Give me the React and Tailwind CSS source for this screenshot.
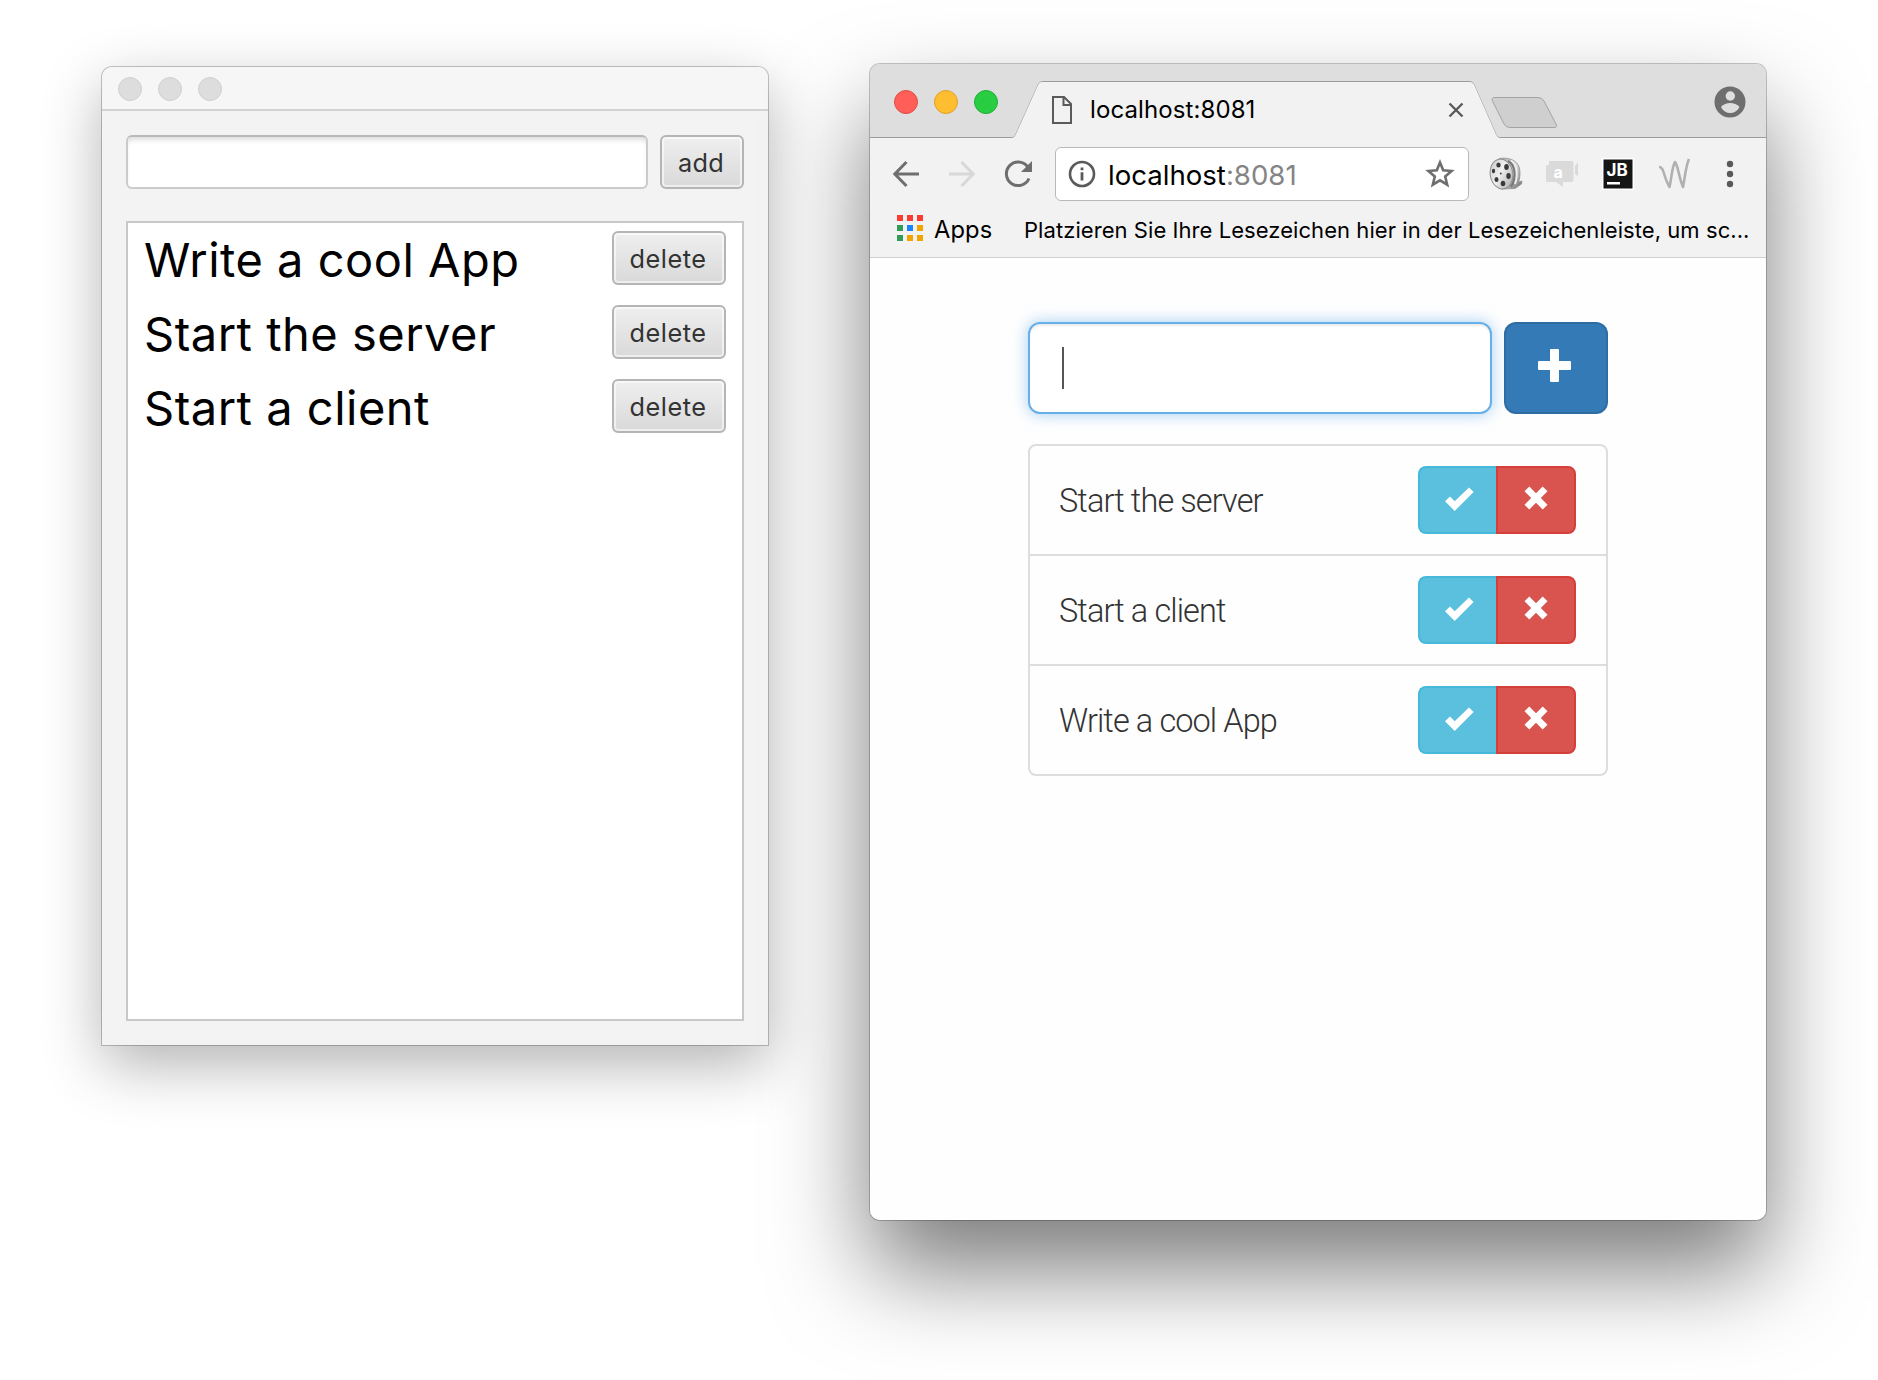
import React from "react";

const sys = "font-[Inter,sans-serif]";

function JavaButton({ children, className }) {
  return (
    <button
      className={`${className} ${sys} flex h-[54px] shrink-0 items-center justify-center rounded-[6px] border-2 border-[#b5b5b5] bg-linear-to-b from-[#efefef] to-[#d9d9d9] pt-[2px] pr-[2px] text-[25.3px] text-[#333] shadow-[inset_0_0_0_2px_rgba(255,255,255,0.55)]`}
    >
      {children}
    </button>
  );
}

function DesktopWindow() {
  const rows = ["Write a cool App", "Start the server", "Start a client"];
  return (
    <section className="mt-[67px] ml-[102px] flex h-[978px] w-[666px] shrink-0 flex-col rounded-t-[10px] bg-[#f3f3f3] shadow-[0_0_0_1px_rgba(0,0,0,0.22),0_20px_60px_rgba(0,0,0,0.3)]">
      <header className="flex h-[44px] shrink-0 items-center gap-4 rounded-t-[10px] border-b-2 border-[#d2d2d2] bg-[#f6f6f6] pt-[2px] pl-4">
        {[0, 1, 2].map((i) => (
          <span key={i} className="size-6 rounded-full border border-[#cfcfcf] bg-[#dddddd]" />
        ))}
      </header>
      <div className="flex grow flex-col px-6 pt-6 pb-6">
        <div className="flex gap-3">
          <div className="h-[54px] w-[522px] rounded-[6px] border-2 border-[#cbcbcb] border-t-[#b9b9b9] bg-white shadow-[inset_0_5px_5px_-2px_rgba(0,0,0,0.13)]" />
          <JavaButton className="w-[84px] tracking-[0.2px]">add</JavaButton>
        </div>
        <ul className="mt-8 flex h-[800px] flex-col gap-5 border-2 border-[#c8c8c8] bg-white pt-2 pr-4 pl-4">
          {rows.map((label) => (
            <li key={label} className="flex h-[54px] items-center justify-between">
              <span className={`${sys} pt-[3px] text-[47px] leading-[54px] tracking-[0.5px] whitespace-nowrap text-black`}>
                {label}
              </span>
              <JavaButton className="w-[114px] tracking-[0.5px]">delete</JavaButton>
            </li>
          ))}
        </ul>
      </div>
    </section>
  );
}

function TabStrip() {
  return (
    <div className="relative h-[74px] shrink-0 overflow-hidden rounded-t-[10px] bg-[#dedede]">
      <svg className="absolute inset-0" width="896" height="74" viewBox="0 0 896 74">
        <path
          d="M0 73.5H142.5Q144.500 73.500 145.500 71L168.500 20Q170 17.500 172.500 17.500H600Q602.500 17.500 604 20.500L626 70.500Q627.500 73.500 629.500 73.500H896"
          fill="none"
          stroke="#9b9b9b"
        />
        <path
          d="M142.5 74Q144.500 73.500 145.500 71L168.500 20Q170 18 172.500 18H600Q602.500 18 604 20.500L626 70.500Q627.500 73.500 629.500 74Z"
          fill="#f2f2f2"
        />
        <path
          d="M625 33.500H668Q672 33.500 674 37L686 60Q688 63.500 684 63.500H640Q636 63.500 634 60L622.500 37Q621 33.500 625 33.500Z"
          fill="#cfcfcf"
          stroke="#a3a3a3"
        />
      </svg>
      <div className="relative flex h-full items-center pt-[2px]">
        <div className="ml-6 flex gap-4">
          <span className="size-6 rounded-full border border-[#e24b45] bg-[#ff5f58]" />
          <span className="size-6 rounded-full border border-[#e0a028] bg-[#ffbe2f]" />
          <span className="size-6 rounded-full border border-[#1fae34] bg-[#29cd42]" />
        </div>
        <svg className="mt-[16px] ml-[50px] size-[28px]" viewBox="0 0 28 28" fill="none" stroke="#5a5a5a" strokeWidth="2">
          <path d="M5 1H16L23 8V27H5Z M15.500 1V9H23" />
        </svg>
        <span className={`${sys} mt-[16px] ml-[14px] w-[358px] text-[24px] leading-7 tracking-[0.1px] text-black`}>
          localhost:8081
        </span>
        <svg className="mt-[16px] size-[16px]" viewBox="0 0 16 16" stroke="#5a5a5a" strokeWidth="2.4">
          <path d="M1.500 1.500L14.500 14.500M14.500 1.500L1.500 14.500" />
        </svg>
        <svg className="mr-[20px] ml-auto size-[32px]" viewBox="0 0 32 32">
          <circle cx="16" cy="16" r="15.500" fill="#6e6e6e" />
          <circle cx="16.300" cy="10" r="4.700" fill="#dedede" />
          <path d="M7 21C9 18.500 13 17 16.200 17S23.500 18.500 25.500 21C23.500 25 20 27 16.200 27S9 25 7 21Z" fill="#dedede" />
        </svg>
      </div>
    </div>
  );
}

function FilmReel() {
  return (
    <svg className="size-[34px]" viewBox="0 0 34 34">
      <defs>
        <linearGradient id="reel" x1="0" x2="1" y1="0" y2="1">
          <stop offset="0" stopColor="#c4c4c4" />
          <stop offset="0.45" stopColor="#f0f0f0" />
          <stop offset="1" stopColor="#a4a4a4" />
        </linearGradient>
        <linearGradient id="rim" x1="0" x2="1" y1="0" y2="1">
          <stop offset="0" stopColor="#b0b0b0" />
          <stop offset="0.5" stopColor="#d8d8d8" />
          <stop offset="1" stopColor="#6a6a6a" />
        </linearGradient>
      </defs>
      <path d="M10 1.500C20 0 28 3 30.500 11C31.500 17 31 21 29.500 25L33 24L32.500 27L26 31.500L12 32Z" fill="url(#rim)" stroke="#909090" strokeWidth="0.800" />
      <path d="M19 4C26 7 28 20 22 30" fill="none" stroke="#787878" strokeWidth="2" />
      <path d="M22 3.500C28 7 29.500 17 26 27" fill="none" stroke="#efefef" strokeWidth="1.800" />
      <ellipse cx="12.500" cy="17" rx="11.300" ry="15" fill="url(#reel)" stroke="#8d8d8d" transform="rotate(-10 12.500 17)" />
      <g fill="#3a3a3a">
        <ellipse cx="9.500" cy="8" rx="2.200" ry="2.500" />
        <ellipse cx="17.500" cy="10" rx="2.300" ry="3" />
        <ellipse cx="19.500" cy="19" rx="2.200" ry="3" />
        <ellipse cx="14" cy="26.500" rx="2.300" ry="2.700" />
        <ellipse cx="7.500" cy="22.500" rx="2" ry="2.500" />
        <ellipse cx="4.500" cy="14" rx="1.600" ry="2.300" />
        <circle cx="11.800" cy="16.500" r="0.900" />
      </g>
    </svg>
  );
}

function Toolbar() {
  return (
    <div className="relative flex h-[72px] shrink-0 items-center">
      <svg className="ml-[22px] size-[28px]" viewBox="0 0 28 28" fill="none" stroke="#6e6e6e" strokeWidth="3">
        <path d="M27 14H3M14.500 2L2.800 14L14.500 26" />
      </svg>
      <svg className="ml-[28px] size-[28px]" viewBox="0 0 28 28" fill="none" stroke="#d8d8d8" strokeWidth="3">
        <path d="M1 14H25M13.500 2L25.200 14L13.500 26" />
      </svg>
      <svg className="ml-[28px] size-[28px]" viewBox="0 0 28 28">
        <path d="M23.500 6.500A11.800 11.800 0 1 0 25 18.500" fill="none" stroke="#6e6e6e" strokeWidth="3" />
        <path d="M28 1V12H17Z" fill="#6e6e6e" />
      </svg>
      <div className="ml-[23px] flex h-[54px] w-[414px] items-center rounded-[6px] border border-[#b8b8b8] bg-white">
        <svg className="ml-[12px] size-[28px]" viewBox="0 0 28 28">
          <circle cx="14" cy="14" r="12" fill="none" stroke="#5a5a5a" strokeWidth="2.600" />
          <path d="M12.600 7.500H15.400V10.300H12.600ZM12.600 12.300H15.400V20.500H12.600Z" fill="#5a5a5a" />
        </svg>
        <span className={`${sys} ml-[12px] pt-[2px] text-[27.6px] leading-8 text-black`}>
          localhost<span className="text-[#848484]">:8081</span>
        </span>
        <svg className="mr-[13px] ml-auto size-[30px]" viewBox="0 0 30 30" fill="none" stroke="#6e6e6e" strokeWidth="2.600">
          <path d="M15 3.500L18.200 11.300L26.600 12L20.200 17.500L22.200 25.700L15 21.300L7.800 25.700L9.800 17.500L3.400 12L11.800 11.300Z" />
        </svg>
      </div>
      <div className="ml-[20px] flex items-center">
        <FilmReel />
        <svg className="ml-[22px] h-[28px] w-[34px]" viewBox="0 0 34 28">
          <path d="M4 1H27Q28.500 1 28.500 3V20Q28.500 22 26 22H18V27L11 22H2Q1 22 1 20V6Q1 5 3 5H4Z" fill="#dadada" />
          <path d="M30 6Q32 4 33 2V17Q32 15 30 14Z" fill="#dadada" />
          <text x="8.500" y="18" fontSize="16" fontWeight="700" fontFamily="Inter" fill="#fff">a</text>
        </svg>
        <svg className="ml-[23px] size-[32px]" viewBox="0 0 32 32">
          <rect width="32" height="32" fill="#fff" />
          <rect x="1.500" y="1.500" width="29" height="29" fill="#151515" />
          <rect x="5" y="24" width="13" height="2.500" fill="#fff" />
          <text x="4.500" y="17.500" fontSize="17" fontWeight="700" fontFamily="Inter" fill="#fff">JB</text>
        </svg>
        <svg className="ml-[23px] size-[34px]" viewBox="0 0 34 34" fill="none" stroke="#b0b0b0" strokeLinejoin="round" strokeWidth="2.600">
          <path d="M2 10Q5 10 6.500 15Q9 24 12.500 30C14 24 15 10 18 5C21 8 22 21 26 30C28 20 29 8 32 2" />
        </svg>
        <svg className="ml-[35px] h-[28px] w-[8px]" viewBox="0 0 8 28" fill="#5a5a5a">
          <circle cx="4" cy="4" r="3.200" />
          <circle cx="4" cy="14" r="3.200" />
          <circle cx="4" cy="24" r="3.200" />
        </svg>
      </div>
    </div>
  );
}

const appDots = [
  "bg-[#fa3c33]",
  "bg-[#fa3c33]",
  "bg-[#fa3c33]",
  "bg-[#319b58]",
  "bg-[#1a85ff]",
  "bg-[#f2a400]",
  "bg-[#319b58]",
  "bg-[#f2a400]",
  "bg-[#f2a400]",
];

function BookmarkBar() {
  return (
    <div className="flex h-[48px] shrink-0 items-center border-b border-[#cfcfcf]">
      <div className="mb-[11px] ml-[27px] grid grid-cols-3 gap-1">
        {appDots.map((c, i) => (
          <span key={i} className={`size-[6px] ${c}`} />
        ))}
      </div>
      <span className={`${sys} mb-[7px] ml-[11px] w-[90px] text-[23.7px] leading-7 tracking-[0.1px] text-black`}>Apps</span>
      <span className={`${sys} mb-[7px] text-[22px] leading-7 tracking-[0.06px] whitespace-nowrap text-black`}>
        Platzieren Sie Ihre Lesezeichen hier in der Lesezeichenleiste, um sc...
      </span>
    </div>
  );
}

function TodoPage() {
  return (
    <main className="flex grow flex-col rounded-b-[10px] bg-[#fefefe] px-[158px] pt-[64px]">
      <div className="flex gap-3">
        <div className="flex h-[92px] w-[464px] items-center rounded-[12px] border-2 border-[#66afe9] bg-white pl-8 shadow-[inset_0_2px_2px_rgba(0,0,0,0.075),0_0_16px_rgba(102,175,233,0.6)]">
          <span className="h-[42px] w-[2px] bg-[#555]" />
        </div>
        <button className="flex h-[92px] w-[104px] items-center justify-center rounded-[12px] border-2 border-[#2e6da4] bg-[#337ab7]">
          <svg className="mb-[5px] ml-[-3px] size-[33px]" viewBox="0 0 33 33" fill="#fff">
            <path d="M13 0H20Q21 0 21 1V12H32Q33 12 33 13V20Q33 21 32 21H21V32Q21 33 20 33H13Q12 33 12 32V21H1Q0 21 0 20V13Q0 12 1 12H12V1Q12 0 13 0Z" />
          </svg>
        </button>
      </div>
      <ul className="mt-[30px] flex flex-col divide-y-2 divide-[#ddd] rounded-[8px] border-2 border-[#ddd] bg-[#fefefe]">
        {["Start the server", "Start a client", "Write a cool App"].map((label) => (
          <li key={label} className="flex h-[110px] items-center justify-between pr-[30px] pl-[29px] last:h-[108px]">
            <span className="pt-[2px] font-[Roboto,sans-serif] text-[32.5px] font-light tracking-[-0.9px] text-[#333]">{label}</span>
            <div className="flex h-[68px]">
              <button className="flex w-[78px] items-center justify-center rounded-l-[8px] border-2 border-r-0 border-[#46b8da] bg-[#5bc0de]">
                <svg className="mb-[2px] ml-[2px] h-[24px] w-[29px]" viewBox="0 0 29 24" fill="#fff">
                  <path d="M24 0.400L28.600 5L9.700 23.900L0 14.200L5 9.500L9.700 14.200Z" />
                </svg>
              </button>
              <button className="flex w-[80px] items-center justify-center rounded-r-[8px] border-2 border-[#d43f3a] bg-[#d9534f]">
                <svg className="mb-[4px] size-[24px]" viewBox="0 0 24 24" fill="#fff">
                  <path d="M5.300 0.500L12 7.200L18.700 0.500L23.500 5.300L16.800 12L23.500 18.700L18.700 23.500L12 16.800L5.300 23.500L0.500 18.700L7.200 12L0.500 5.300Z" />
                </svg>
              </button>
            </div>
          </li>
        ))}
      </ul>
    </main>
  );
}

function BrowserWindow() {
  return (
    <section className="mt-[64px] ml-[102px] flex h-[1156px] w-[896px] shrink-0 flex-col rounded-[10px] bg-[#f2f2f2] shadow-[0_0_0_1px_rgba(0,0,0,0.22),0_50px_96px_rgba(0,0,0,0.52)]">
      <TabStrip />
      <Toolbar />
      <BookmarkBar />
      <TodoPage />
    </section>
  );
}

export default function App() {
  return (
    <div className="flex h-[1380px] w-[1878px] items-start overflow-hidden bg-white">
      <DesktopWindow />
      <BrowserWindow />
    </div>
  );
}
